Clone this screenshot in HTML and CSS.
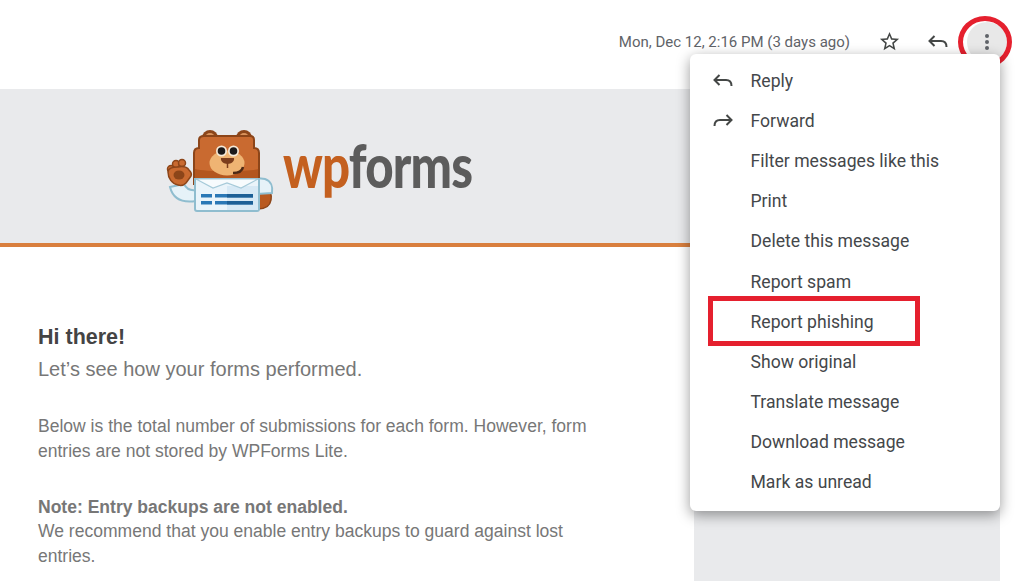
FILE: index.html
```html
<!DOCTYPE html>
<html lang="en">
<head>
  <meta charset="UTF-8">
  <title>Report phishing</title>
  <link rel="stylesheet" href="styles.css">
</head>
<body>

  <div class="mail-head">
    <span class="mail-date">Mon, Dec 12, 2:16 PM (3 days ago)</span>
    <div class="head-btn">
      <svg width="23" height="23" viewBox="0 0 24 24" fill="#444746"><path d="M22 9.24l-7.19-.62L12 2 9.19 8.63 2 9.24l5.46 4.73L5.82 21 12 17.27 18.18 21l-1.63-7.03L22 9.24zM12 15.4l-3.76 2.27 1-4.28-3.32-2.88 4.38-.38L12 6.1l1.71 4.04 4.38.38-3.32 2.88 1 4.28L12 15.4z"/></svg>
    </div>
    <div class="head-btn">
      <svg width="24" height="24" viewBox="0 0 24 24" class="line-icon"><path d="M8.500 6 3.500 11l5 5M3.500 11H15c3.500 0 5.500 2 5.500 6"/></svg>
    </div>
    <div class="head-btn more-btn">
      <svg width="24" height="24" viewBox="0 0 24 24" fill="#5f6368"><circle cx="12" cy="6" r="2"/><circle cx="12" cy="12" r="2"/><circle cx="12" cy="18" r="2"/></svg>
      <span class="red-circle"></span>
    </div>
  </div>

  <div class="mail-body">
    <div class="banner">
      <svg class="bear" width="120" height="95" viewBox="160 120 120 95">
        <!-- right hand and sleeve -->
        <path d="M258 186h8c4 2 6 6 5 11-1 6-6 9-13 9z" fill="#b9591f" stroke="#8c4519" stroke-width="1.500"/>
        <path d="M257 175l8 1c6 2 8 8 7 14l-15 1z" fill="#e6f2f8" stroke="#8fbdcf" stroke-width="2"/>
        <!-- ears -->
        <circle cx="210" cy="135" r="8" fill="#8c4519"/>
        <circle cx="210" cy="135" r="5" fill="#d9935c"/>
        <circle cx="244" cy="135" r="8" fill="#8c4519"/>
        <circle cx="244" cy="135" r="5" fill="#d9935c"/>
        <!-- head -->
        <path d="M204 133h46c3 0 4 2 4 4v8c3 0 5 2 5 5v31h-65v-31c0-3 2-5 5-5v-8c0-2 1-4 5-4z" fill="#c96a30" stroke="#8c4519" stroke-width="2"/>
        <path d="M195 166c10 3 53 3 63 0v14h-63z" fill="#b3561f"/>
        <ellipse cx="227" cy="160" rx="17.500" ry="12.500" fill="#efb473"/>
        <circle cx="221.500" cy="148" r="5.500" fill="#f6ead8"/>
        <circle cx="233.500" cy="148" r="5.500" fill="#f6ead8"/>
        <circle cx="221.500" cy="148" r="3.800" fill="#1c1a1a"/>
        <circle cx="233.500" cy="148" r="3.800" fill="#1c1a1a"/>
        <path d="M221 155h13c1 3-3 6-6.500 6s-7.500-3-6.500-6z" fill="#7c3d1c"/>
        <path d="M227.500 160v5" stroke="#7c3d1c" stroke-width="1.500"/>
        <path d="M233 170c5 0 9-1 10-6" fill="none" stroke="#4d2a16" stroke-width="2.500"/>
        <!-- left arm and paw -->
        <path d="M170 184c3 12 13 16 26 14v-11c-6 1-10-2-12-6z" fill="#e6f2f8" stroke="#8fbdcf" stroke-width="2"/>
        <circle cx="171" cy="166" r="3.500" fill="#c96a30" stroke="#8c4519" stroke-width="1.500"/>
        <circle cx="176" cy="161" r="3.500" fill="#c96a30" stroke="#8c4519" stroke-width="1.500"/>
        <circle cx="182" cy="160" r="3.500" fill="#c96a30" stroke="#8c4519" stroke-width="1.500"/>
        <path d="M168 169c0-4 6-5 10-5 5-1 9 0 11 3 2 2 3 4 2 6l-5 7c-2 2-5 3-8 2-6-1-10-7-10-13z" fill="#c96a30" stroke="#8c4519" stroke-width="1.500"/>
        <ellipse cx="179" cy="172" rx="5.500" ry="4.500" fill="#8c4519"/>
        <!-- shirt -->
        <path d="M195 176h64v30c0 1-1 2-2 2h-60c-1 0-2-1-2-2z" fill="#eaf4fa" stroke="#8fbdcf" stroke-width="2"/>
        <path d="M227 183h31v24h-31z" fill="#d7e9f5"/>
        <path d="M196 176h62l-17 9-14-5-14 5z" fill="#f7fbfd" stroke="#a6cad9" stroke-width="1.200"/>
        <path d="M201 191h11v3.500h-11zM215 191h38v3.500h-38zM201 198h11v3.500h-11zM215 198h38v3.500h-38z" fill="#2a78b6"/>
        <path d="M227 191h26v3.500h-26zM227 198h26v3.500h-26z" fill="#1c5f96"/>
      </svg>
      <span class="wordmark"><span class="wordmark-wp">wp</span>forms</span>
    </div>

    <div class="mail-columns">
      <div class="mail-text">
        <h2>Hi there!</h2>
        <p class="lead">Let’s see how your forms performed.</p>
        <p>Below is the total number of submissions for each form. However, form entries are not stored by WPForms Lite.</p>
        <p class="note"><strong>Note: Entry backups are not enabled.</strong><br>We recommend that you enable entry backups to guard against lost entries.</p>
      </div>
      <div class="mail-side"></div>
    </div>
  </div>

  <ul class="menu">
    <li>
      <span class="menu-icon"><svg width="24" height="24" viewBox="0 0 24 24" class="line-icon"><path d="M8.500 6 3.500 11l5 5M3.500 11H15c3.500 0 5.500 2 5.500 6"/></svg></span>
      Reply
    </li>
    <li>
      <span class="menu-icon"><svg width="24" height="24" viewBox="0 0 24 24" class="line-icon"><path d="M15.500 6l5 5-5 5M20.500 11H9c-3.500 0-5.500 2-5.500 6"/></svg></span>
      Forward
    </li>
    <li><span class="menu-icon"></span>Filter messages like this</li>
    <li><span class="menu-icon"></span>Print</li>
    <li><span class="menu-icon"></span>Delete this message</li>
    <li><span class="menu-icon"></span>Report spam</li>
    <li class="marked"><span class="menu-icon"></span>Report phishing<span class="red-box"></span></li>
    <li><span class="menu-icon"></span>Show original</li>
    <li><span class="menu-icon"></span>Translate message</li>
    <li><span class="menu-icon"></span>Download message</li>
    <li><span class="menu-icon"></span>Mark as unread</li>
  </ul>

</body>
</html>
```

FILE: styles.css
```css
body {
  font-family: 'Liberation Sans', Arial, sans-serif;
  background-color: white;
  margin: 0;
  height: 581px;
  overflow: hidden;
}

.mail-head {
  display: flex;
  justify-content: flex-end;
  align-items: center;
  gap: 9px;
  height: 89px;
  padding: 0 17px 6px 0;
  box-sizing: border-box;
}

.mail-date {
  font-family: Roboto, sans-serif;
  font-size: 15px;
  color: #5f6368;
  margin-right: 10px;
}

.head-btn {
  position: relative;
  display: flex;
  align-items: center;
  justify-content: center;
  width: 40px;
  height: 40px;
  border-radius: 50%;
}

.more-btn {
  background-color: #e8e8e8;
}

.red-circle {
  position: absolute;
  top: -6px;
  left: -9px;
  width: 54px;
  height: 52px;
  box-sizing: border-box;
  border: 5px solid #e5202e;
  border-radius: 50%;
}

.line-icon {
  fill: none;
  stroke: #444746;
  stroke-width: 2;
}

.mail-body {
  width: 1000px;
}

.banner {
  display: flex;
  align-items: center;
  height: 154px;
  padding-left: 160px;
  background-color: #e9eaec;
  border-bottom: 4px solid #d97f3e;
}

.bear {
  margin-top: 8px;
}

.wordmark {
  font-family: Lato, sans-serif;
  font-weight: 900;
  font-size: 60px;
  letter-spacing: -1px;
  color: #5c5c5c;
  margin: -2px 0 0 3px;
  transform: scaleX(0.82);
  transform-origin: left center;
}

.wordmark-wp {
  color: #c4601f;
}

.mail-columns {
  display: grid;
  grid-template-columns: 694px 306px;
  height: 334px;
}

.mail-text {
  padding: 75px 90px 0 38px;
  font-size: 17.550px;
  line-height: 25.500px;
  color: #777777;
}

.mail-text h2 {
  margin: 0;
  font-size: 21.500px;
  line-height: 30px;
  color: #444444;
}

.mail-text p {
  margin: 0 0 30px;
}

.mail-text .lead {
  font-size: 20px;
  margin: 5px 0 31px;
}

.mail-text .note {
  line-height: 24.800px;
}

.mail-side {
  background-color: #e9eaec;
}

.menu {
  position: absolute;
  top: 54px;
  left: 690px;
  width: 310px;
  margin: 0;
  padding: 7px 0 9px;
  box-sizing: border-box;
  list-style: none;
  background-color: white;
  border-radius: 6px;
  box-shadow: 0 4px 14px rgba(0, 0, 0, 0.4);
  font-family: Roboto, sans-serif;
  font-size: 17.600px;
  color: #44474a;
}

.menu li {
  display: flex;
  align-items: center;
  height: 40.100px;
}

.menu-icon {
  display: flex;
  width: 60.500px;
  padding-left: 21px;
  box-sizing: border-box;
}

.marked {
  position: relative;
}

.red-box {
  position: absolute;
  top: -6px;
  left: 18px;
  width: 212px;
  height: 50px;
  box-sizing: border-box;
  border: 5px solid #e5202e;
}
```
